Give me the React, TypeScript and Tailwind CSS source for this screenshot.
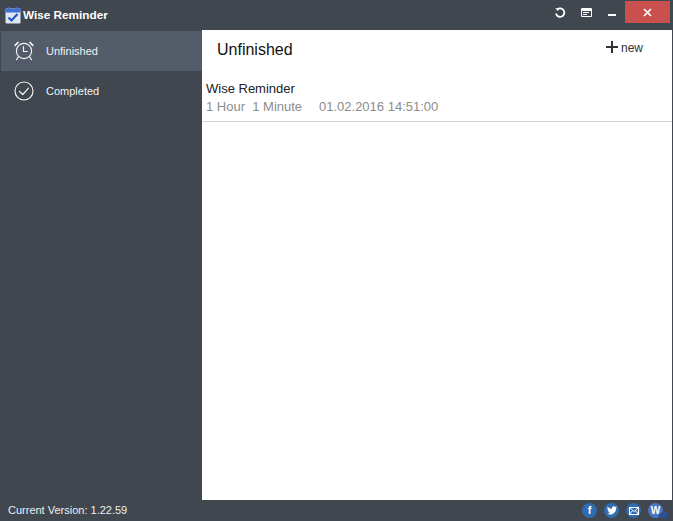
import React from "react";

const font = { fontFamily: '"Liberation Sans", Arial, sans-serif' };

const ClockIcon = () => (
  <svg width="20" height="20" viewBox="0 0 20 20" fill="none" stroke="#f2f3f4" strokeWidth="1.2" strokeLinecap="round" aria-hidden>
    <circle cx="10" cy="10" r="7.6" />
    <path d="M9.5 5.5v5h3.8" />
    <path d="M1.2 4.4 4 1.4M18.8 4.4 16 1.4" strokeWidth="1.6" />
    <path d="M4.2 16 2.6 18.6M15.8 16l1.6 2.6" />
  </svg>
);

const CheckCircleIcon = () => (
  <svg width="20" height="20" viewBox="0 0 20 20" fill="none" stroke="#f2f3f4" strokeWidth="1.2" strokeLinecap="round" strokeLinejoin="round" aria-hidden>
    <circle cx="10" cy="10" r="9" />
    <path d="M5.5 10.5 8.8 13.5 14.5 7.2" />
  </svg>
);

const AppLogo = () => (
  <svg width="16" height="17" viewBox="0 0 16 17" aria-hidden>
    <rect x="0.5" y="1.5" width="15" height="15" rx="1" fill="#dfe6f2" />
    <rect x="0.5" y="1.5" width="15" height="4" fill="#3f6fd0" />
    <rect x="3" y="0" width="1.5" height="3" fill="#3f6fd0" />
    <rect x="11" y="0" width="1.5" height="3" fill="#3f6fd0" />
    <path d="M3.5 10.5 6.5 13.5 12.5 7" fill="none" stroke="#2257c4" strokeWidth="2.2" />
  </svg>
);

const Social = ({ children }: { children: React.ReactNode }) => (
  <div className="w-[15px] h-[15px] rounded-full bg-[#2f6db0] flex items-center justify-center text-white">
    {children}
  </div>
);

export default function App() {
  return (
    <div className="w-[673px] h-[521px] bg-[#40474f] flex flex-col overflow-hidden" style={font}>
      {/* title bar */}
      <div className="h-[30px] flex items-start shrink-0">
        <div className="flex items-center gap-[2px] pl-[5px] pt-[6px]">
          <AppLogo />
          <span className="text-white text-[11.75px] font-bold leading-[18px]">Wise Reminder</span>
        </div>
        <div className="ml-auto flex items-start pr-[3px]">
          <svg className="mt-[7px]" width="12" height="12" viewBox="0 0 12 12" fill="none" stroke="#fff" strokeWidth="1.8" aria-hidden>
            <path d="M3.2 2.6A4.2 4.2 0 1 1 2 6.5" />
            <path d="M1.2 1.2h3v3z" fill="#fff" stroke="none" />
          </svg>
          <svg className="mt-[8px] ml-[15px]" width="11" height="10" viewBox="0 0 11 10" fill="none" stroke="#fff" aria-hidden>
            <path d="M0.5 0.5h10v8h-10z" strokeWidth="1" />
            <path d="M0.5 2h10" strokeWidth="2" />
            <path d="M2 4.5h6M2 6.5h4" strokeWidth="1" />
          </svg>
          <div className="mt-[14px] ml-[16px] w-[8px] h-[2px] bg-white" />
          <div className="mt-px ml-[9px] w-[45px] h-[22px] bg-[#c9504d] flex items-center justify-center">
            <svg width="9" height="9" viewBox="0 0 9 9" stroke="#fff" strokeWidth="1.7" aria-hidden>
              <path d="M1 1l7 7M8 1L1 8" />
            </svg>
          </div>
        </div>
      </div>

      {/* body */}
      <div className="flex-1 flex min-h-0">
        <div className="w-[202px] shrink-0 pl-px pt-px">
          <div className="h-[40px] bg-[#545b69] flex items-center pl-[13px] gap-[12px]">
            <ClockIcon />
            <span className="text-[#f2f3f4] text-[11px]">Unfinished</span>
          </div>
          <div className="h-[40px] flex items-center pl-[13px] gap-[12px]">
            <CheckCircleIcon />
            <span className="text-[#f2f3f4] text-[11px]">Completed</span>
          </div>
        </div>
        <div className="flex-1 bg-white mr-px flex flex-col">
          <div className="h-[43px] pl-[15px] pr-[29px] shrink-0 flex items-start pt-[10px]">
            <span className="text-[16px] leading-[20px] text-[#111]">Unfinished</span>
            <div className="ml-auto -mt-[2px] flex items-center gap-[2px]">
              <svg className="mb-[2px]" width="14" height="14" viewBox="0 0 14 14" stroke="#333" strokeWidth="2" aria-hidden>
                <path d="M7 1v12M1 7h12" />
              </svg>
              <span className="text-[12px] leading-[20px] text-[#333]">new</span>
            </div>
          </div>
          <div className="h-[49px] border-b border-[#d4d4d4] pl-[4px] pt-[7px] shrink-0">
            <div className="text-[13px] leading-[18px] text-[#222]">Wise Reminder</div>
            <div className="flex text-[13px] leading-[18px] text-[#8c8c8c]">
              <span className="w-[113px]">1 Hour&nbsp;&nbsp;1 Minute</span>
              <span>01.02.2016 14:51:00</span>
            </div>
          </div>
        </div>
      </div>

      {/* status bar */}
      <div className="h-[21px] shrink-0 flex items-center pl-[8px] pr-[6px]">
        <span className="text-[#eef0f2] text-[11px]">Current Version: 1.22.59</span>
        <div className="ml-auto flex items-center gap-[7px]">
          <Social>
            <span className="text-[11px] font-bold leading-none">f</span>
          </Social>
          <Social>
            <svg width="10" height="9" viewBox="0 0 24 20" fill="#fff" aria-hidden>
              <path d="M24 2.4a10 10 0 0 1-2.8.8A5 5 0 0 0 23.3.5a10 10 0 0 1-3.1 1.2 4.9 4.9 0 0 0-8.4 4.5A14 14 0 0 1 1.7.9a4.9 4.9 0 0 0 1.5 6.6 5 5 0 0 1-2.2-.6 4.9 4.9 0 0 0 3.9 4.9 5 5 0 0 1-2.2.1 4.9 4.9 0 0 0 4.6 3.4A9.9 9.9 0 0 1 0 17.3 14 14 0 0 0 21.5 5a10 10 0 0 0 2.5-2.6z" />
            </svg>
          </Social>
          <Social>
            <svg width="10" height="8" viewBox="0 0 10 8" fill="none" stroke="#fff" strokeWidth="1" aria-hidden>
              <rect x="0.5" y="0.5" width="9" height="7" />
              <path d="M0.5 0.5 5 4.5l4.5-4M0.5 7.5 3.5 3.5M9.5 7.5 6.5 3.5" />
            </svg>
          </Social>
          <div className="relative w-[19px] h-[15px]">
            <div className="absolute left-0 top-0 w-[15px] h-[15px] rounded-full bg-[#4a76c0] flex items-center justify-center text-white text-[10px] font-bold leading-none">W</div>
            <div className="absolute right-0 bottom-0 w-[9px] h-[6px] bg-[#2d4f94] rounded-tl-full" />
          </div>
        </div>
      </div>
    </div>
  );
}
